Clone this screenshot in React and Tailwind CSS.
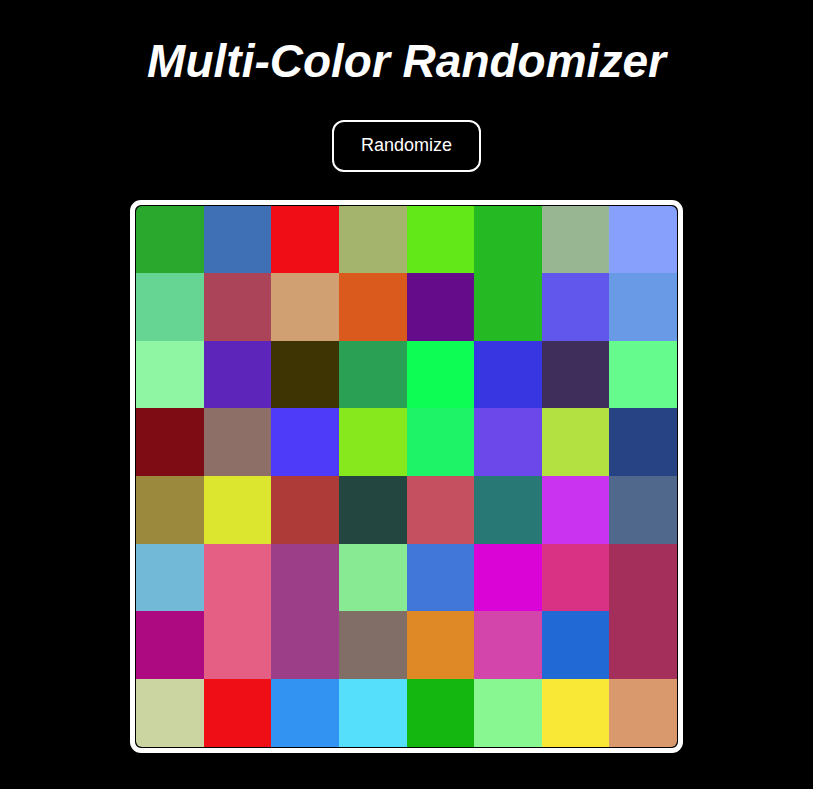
import { useState } from 'react';

const initialColors = [
  '#2aa82e', '#3f70b5', '#f10d15', '#a5b46c', '#62e718', '#25ba23', '#97b691', '#87a0fb',
  '#66d593', '#ac4459', '#d0a072', '#da5a1d', '#640c8a', '#25ba23', '#6257ed', '#699ae6',
  '#8ff7a3', '#5d25b9', '#3e3303', '#2aa055', '#0dfd55', '#3736e1', '#3f2d5c', '#66fc8d',
  '#7e0c15', '#8d6f68', '#4e3af9', '#87e81d', '#1ef266', '#6c48ea', '#b3e141', '#284384',
  '#9b8a3e', '#dce62e', '#ae3b37', '#234640', '#c55060', '#287876', '#ca33ef', '#4f688c',
  '#71b9d6', '#e55f85', '#9c3f88', '#88eb93', '#4177d9', '#d904d5', '#d93285', '#a52f5b',
  '#ad0981', '#e55f85', '#9c3f88', '#806e67', '#de8925', '#d345ab', '#2169d5', '#a52f5b',
  '#cbd5a1', '#f00e16', '#3293f2', '#55dffa', '#14b70f', '#88f791', '#f9e936', '#da996d',
];

const randomColor = () =>
  '#' + Math.floor(Math.random() * 0xffffff).toString(16).padStart(6, '0');

export default function App() {
  const [colors, setColors] = useState(initialColors);

  const randomize = () => setColors(prev => prev.map(() => randomColor()));

  return (
    <div className="min-h-screen bg-black text-white font-['Liberation_Sans',Arial,sans-serif] flex flex-col items-center pt-[35px] pb-9">
      <h1 className="text-[46px] font-bold italic leading-[1.15] text-white">Multi-Color Randomizer</h1>

      <button
        onClick={randomize}
        className="mt-[32px] px-[27px] py-[13.5px] border-2 border-white rounded-[12px] bg-black text-white text-[18px] leading-[1.15]"
      >
        Randomize
      </button>

      {/* Color grid */}
      <div className="mt-[28px] border-[5px] border-white rounded-[11px] p-px bg-black">
        <div className="grid grid-cols-8 w-[541px] h-[541px] rounded-[6px] overflow-hidden">
          {colors.map((c, i) => (
            <div key={i} style={{ backgroundColor: c }} />
          ))}
        </div>
      </div>
    </div>
  );
}
